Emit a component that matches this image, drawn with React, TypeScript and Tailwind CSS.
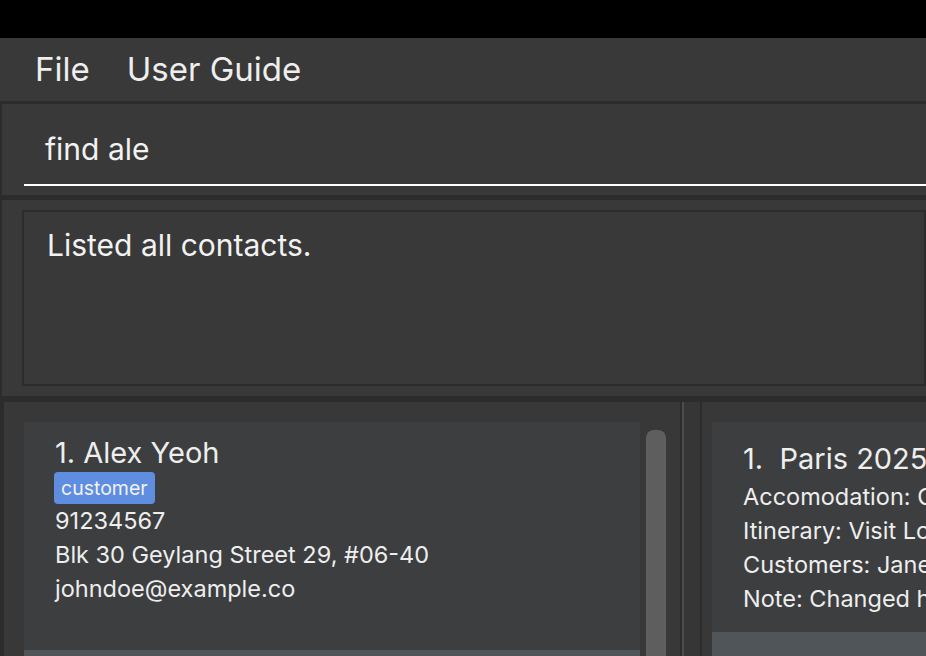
const font = { fontFamily: 'Inter, "Noto Sans", sans-serif' }

function PersonCard() {
  return (
    <div className="w-[616px] h-[228px] shrink-0 bg-[#3d3e40] pl-[31px] pt-[13px] text-[#eeeeee]">
      <div className="text-[29px] leading-[36px]">1. Alex Yeoh</div>
      <div className="mt-[1px] flex">
        <span className="h-[32px] px-[7px] -ml-[1px] rounded-[4px] bg-[#5f8ddf] text-[19.5px] leading-[32px] text-[#f2f2f2]">
          customer
        </span>
      </div>
      <div className="text-[23.5px] leading-[34px]">91234567</div>
      <div className="text-[23.5px] leading-[34px]">Blk 30 Geylang Street 29, #06-40</div>
      <div className="text-[23.5px] leading-[34px]">johndoe@example.co</div>
    </div>
  )
}

function TripCard() {
  return (
    <div className="w-[420px] h-[210px] shrink-0 bg-[#3d3e40] pl-[31px] pt-[19px] text-[#eeeeee] whitespace-nowrap">
      <div className="text-[29px] leading-[36px] whitespace-pre">1.  Paris 2025</div>
      <div className="mt-[3px] text-[23.5px] leading-[34px]">Accomodation: Grand Hotel Paris</div>
      <div className="text-[23.5px] leading-[34px]">Itinerary: Visit Louvre Museum</div>
      <div className="text-[23.5px] leading-[34px]">Customers: Jane Doe</div>
      <div className="text-[23.5px] leading-[34px]">Note: Changed hotel booking</div>
    </div>
  )
}

export default function App() {
  return (
    <div className="w-[926px] h-[656px] overflow-hidden bg-[#2c2c2c] flex flex-col" style={font}>
      <div className="h-[38px] shrink-0 bg-black" />

      {/* menu bar */}
      <div className="h-[63px] shrink-0 bg-[#393939] flex items-center pl-[35px] gap-[37px] text-[33px] text-[#eeeeee]">
        <span>File</span>
        <span>User Guide</span>
      </div>
      <div className="h-[3px] shrink-0" />

      {/* command box */}
      <div className="h-[91px] shrink-0 ml-[2px] bg-[#393939] pl-[22px] pt-[24px]">
        <div className="h-[58px] border-b-2 border-white pl-[21px] pt-[2px] text-[30px] leading-[38px] text-[#f2f2f2]">
          find ale
        </div>
      </div>
      <div className="h-[5px] shrink-0" />

      {/* result display */}
      <div className="h-[196px] shrink-0 ml-[2px] bg-[#393939] pl-[20px] py-[10px]">
        <div className="h-full border-2 border-[#2c2c2c] pl-[23px] pt-[14px] text-[30px] leading-[38px] text-[#f2f2f2]">
          Listed all contacts.
        </div>
      </div>
      <div className="h-[6px] shrink-0" />

      {/* lists */}
      <div className="flex-1 flex min-h-0">
        <div className="w-[676px] ml-[4px] shrink-0 bg-[#383838] flex pl-[20px] pt-[20px] overflow-hidden">
          <div className="flex flex-col">
            <PersonCard />
            <div className="w-[616px] h-[60px] shrink-0 bg-[#4f5558]" />
          </div>
          <div className="ml-[6px] mt-[8px] w-[20px] h-[260px] shrink-0 rounded-t-[8px] bg-[#5e5e5e]" />
        </div>
        <div className="w-[2px] shrink-0" />
        <div className="w-[2px] shrink-0 bg-[#4c4c4c]" />
        <div className="w-[16px] shrink-0 bg-[#363636]" />
        <div className="w-[2px] shrink-0" />
        <div className="flex-1 bg-[#383838] pl-[10px] pt-[20px] overflow-hidden flex flex-col">
          <TripCard />
          <div className="w-[420px] h-[60px] shrink-0 bg-[#4f5558]" />
        </div>
      </div>
    </div>
  )
}
